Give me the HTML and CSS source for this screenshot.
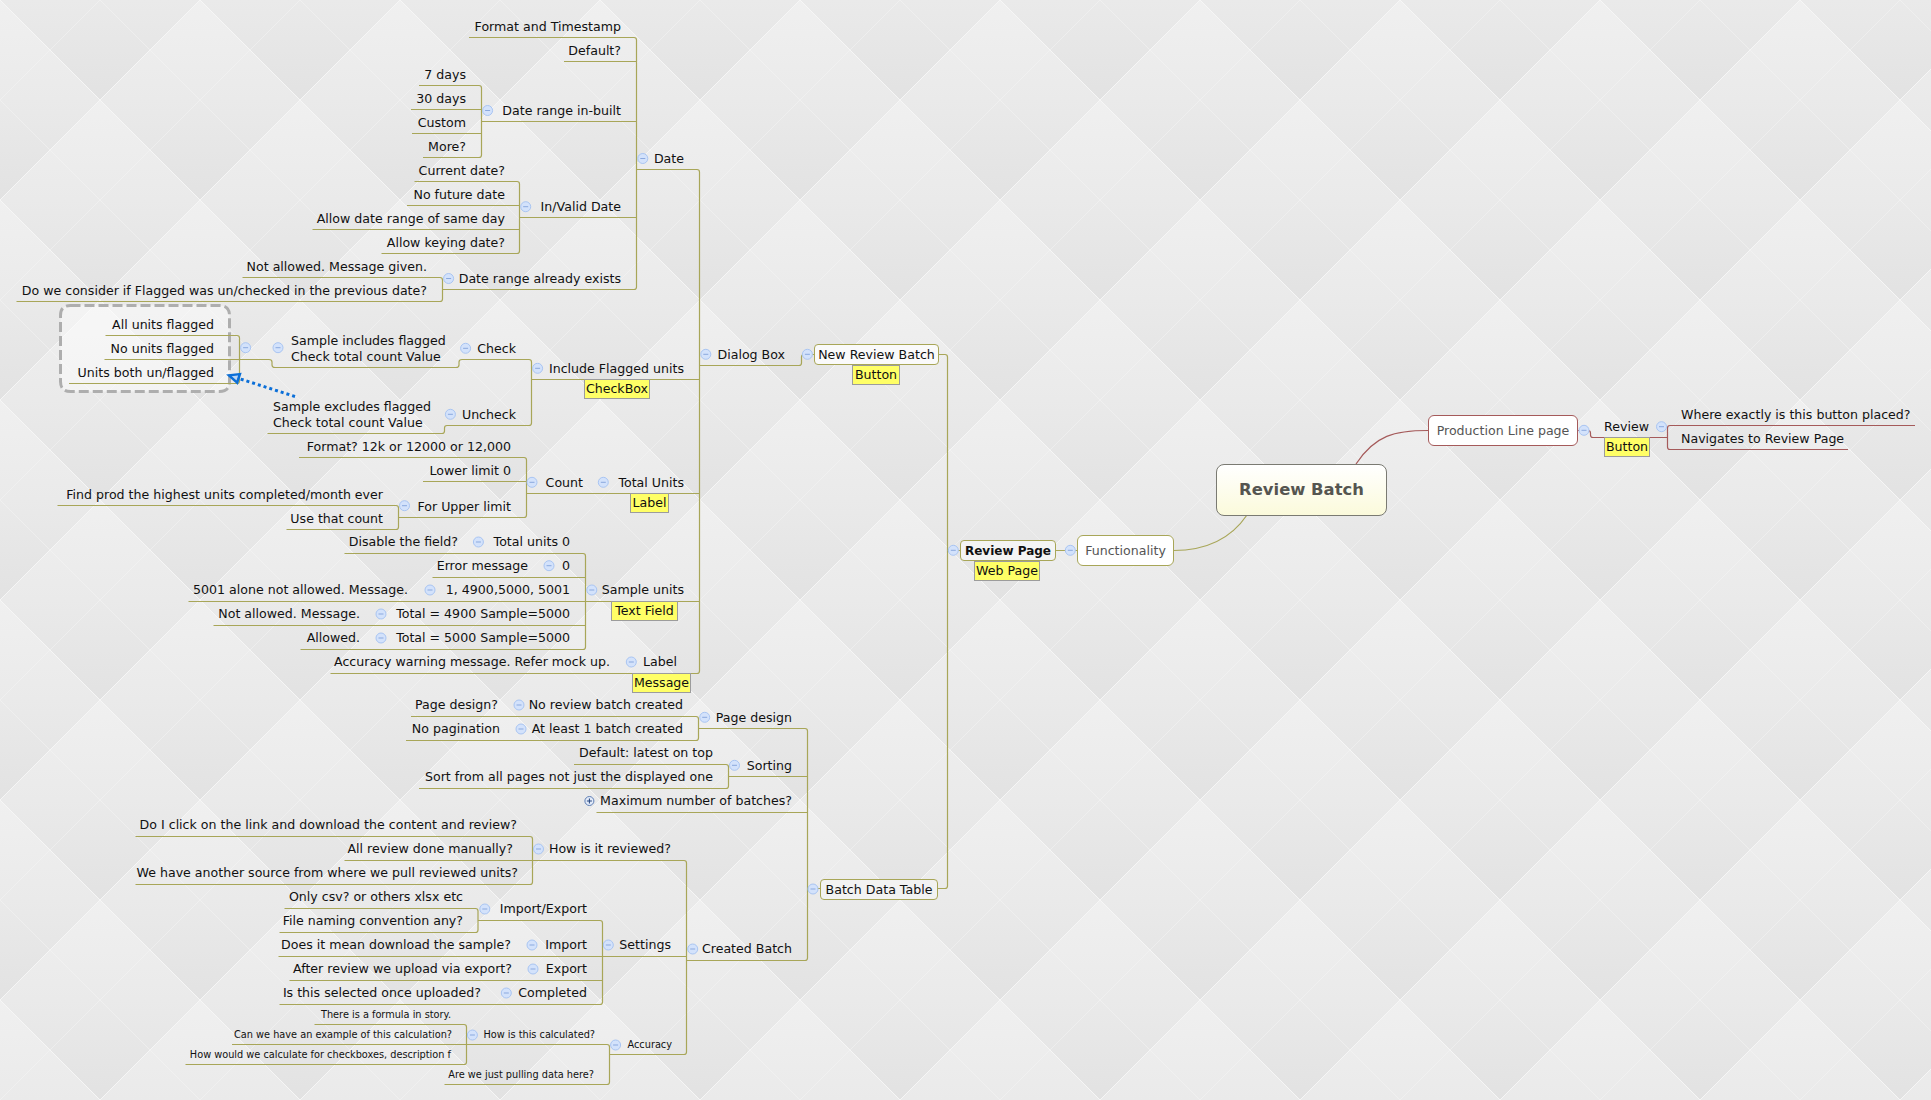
FILE: index.html
```html
<!DOCTYPE html>
<html lang="en">
<head>
<meta charset="utf-8">
<title>Review Batch</title>
<link rel="stylesheet" href="styles.css">
</head>
<body>
<main class="canvas">
<svg class="sheet" width="1931" height="1100" viewBox="0 0 1931 1100" aria-hidden="true">
  <defs>
    <linearGradient id="quilt" x1="0" y1="0" x2="0" y2="1">
      <stop offset="0" stop-color="#f0f0f0"/>
      <stop offset="0.5" stop-color="#eaeaea"/>
      <stop offset="1" stop-color="#e2e2e2"/>
    </linearGradient>
    <pattern id="tile" patternUnits="userSpaceOnUse" width="200" height="200">
      <polygon class="diamond" points="0,0 100,100 0,200 -100,100"/>
      <polygon class="diamond" points="200,0 300,100 200,200 100,100"/>
      <polygon class="diamond" points="100,-100 200,0 100,100 0,0"/>
      <polygon class="diamond" points="100,100 200,200 100,300 0,200"/>
      <path class="seam-soft" d="M0 100L100 0M100 200L200 100M100 0L200 100M0 100L100 200"/>
      <path class="seam" d="M0 0L200 200M0 200L200 0"/>
    </pattern>
    <g id="minus"><circle class="knob" r="5"/><path class="knob-mark" d="M-2.5 0H2.5"/></g>
    <g id="plus"><circle class="knob-open" r="4.5"/><path class="knob-open-mark" d="M-2.5 0H2.5M0 -2.5V2.5"/></g>
    <marker id="head" markerUnits="userSpaceOnUse" markerWidth="16" markerHeight="16" refX="2" refY="7" orient="auto">
      <path class="arrow-head" d="M2 2.500L12 7L2 11.500Z"/>
    </marker>
  </defs>
  <rect width="1931" height="1100" fill="url(#tile)"/>

  <path class="frame" d="M70.500 305.500H219.500Q229.500 305.500 229.500 315.500V381.500Q229.500 391.500 219.500 391.500H70.500Q60.500 391.500 60.500 381.500V315.500Q60.500 305.500 70.500 305.500Z"/>

  <g class="links">
    <path d="M469 37.500H634Q636.500 37.500 636.500 40V287Q636.500 289.500 634 289.500H442.500"/>
    <path d="M564 61.500H636.500M481.500 121.500H636.500M519.500 217.500H636.500"/>
    <path d="M419 85.500H479Q481.500 85.500 481.500 88V155Q481.500 157.500 479 157.500H423M411 109.500H481.500M412 133.500H481.500"/>
    <path d="M414.500 181.500H517Q519.500 181.500 519.500 184V251Q519.500 253.500 517 253.500H381.500M407 205.500H519.500M312.500 229.500H519.500"/>
    <path d="M242.500 277.500H440Q442.500 277.500 442.500 280V299Q442.500 301.500 440 301.500H16.500"/>
    <path d="M636.500 169.500H697Q699.500 169.500 699.500 172V671Q699.500 673.500 697 673.500H330.500"/>
    <path d="M531.500 379.500H699.500M526.500 493.500H699.500M585.500 601.500H699.500"/>
    <path d="M105.500 335.500H237Q239.500 335.500 239.500 338V381Q239.500 383.500 237 383.500H69M104.500 359.500H239.500"/>
    <path d="M240 359.500H269Q272 359.500 272 362V365Q272 367.500 275 367.500H456Q459 367.500 459 365V362Q459 359.500 462 359.500H529Q531.500 359.500 531.500 362V423Q531.500 425.500 529 425.500H447Q444.500 425.500 444.500 428V431Q444.500 433.500 442 433.500H267.500"/>
    <path d="M299 457.500H524Q526.500 457.500 526.500 460V515Q526.500 517.500 524 517.500H398.500M423 481.500H526.500"/>
    <path d="M57.500 505.500H396Q398.500 505.500 398.500 508V527Q398.500 529.500 396 529.500H286.500"/>
    <path d="M344.500 553.500H583Q585.500 553.500 585.500 556V647Q585.500 649.500 583 649.500H300.500M432.500 577.500H585.500M188.500 601.500H585.500M213.500 625.500H585.500"/>
    <path d="M699.500 365.500H799Q801.500 365.500 801.500 363V357Q801.500 354.500 804 354.500H815"/>
    <path d="M938 354.500H945Q947.500 354.500 947.500 357V886Q947.500 888.500 945 888.500H938M947.500 550.500H961M1055 550.500H1078"/>
    <path d="M698 728.500H805Q807.500 728.500 807.500 731V958Q807.500 960.500 805 960.500H686.500M728 776.500H807.500M596.500 812.500H807.500M807.500 888.500H821"/>
    <path d="M411 716.500H696Q698.500 716.500 698.500 719V738Q698.500 740.500 696 740.500H406"/>
    <path d="M574 764.500H726Q728.500 764.500 728.500 767V786Q728.500 788.500 726 788.500H419"/>
    <path d="M532 860.500H684Q686.500 860.500 686.500 863V1052Q686.500 1054.500 684 1054.500H609.500M602.500 956.500H686.500"/>
    <path d="M135.500 836.500H530Q532.500 836.500 532.500 839V882Q532.500 884.500 530 884.500H135.500M344.500 860.500H532.500"/>
    <path d="M478 920.500H600Q602.500 920.500 602.500 923V1002Q602.500 1004.500 600 1004.500H279.500M278.500 956.500H602.500M289.500 980.500H602.500"/>
    <path d="M284.500 908.500H475.500Q478 908.500 478 911V930Q478 932.500 475.500 932.500H279.500"/>
    <path d="M466.500 1044.500H607Q609.500 1044.500 609.500 1047V1082Q609.500 1084.500 607 1084.500H444.500"/>
    <path d="M314.500 1024.500H464Q466.500 1024.500 466.500 1027V1062Q466.500 1064.500 464 1064.500H185.500M232 1044.500H466.500"/>
    <path d="M1173.500 550.500C1205 550.500 1230 540 1247 515"/>
  </g>
  <g class="links-red">
    <path d="M1428 430.500C1395 430.500 1375 435 1356 464"/>
    <path d="M1577 430.500H1588Q1590.500 430.500 1590.500 433V435Q1590.500 437.500 1593 437.500H1667.500"/>
    <path d="M1915 425.500H1670Q1667.500 425.500 1667.500 428V447Q1667.500 449.500 1670 449.500H1848"/>
  </g>

  <use href="#minus" x="487.600" y="110.500"/><use href="#minus" x="642.800" y="158.500"/><use href="#minus" x="525.700" y="206.700"/>
  <use href="#minus" x="448.600" y="278.500"/><use href="#minus" x="245.600" y="347.700"/><use href="#minus" x="278" y="347.700"/>
  <use href="#minus" x="465.600" y="348.300"/><use href="#minus" x="537.600" y="368.300"/><use href="#minus" x="450.400" y="414.300"/>
  <use href="#minus" x="532" y="482.300"/><use href="#minus" x="603.300" y="482.300"/><use href="#minus" x="404.500" y="505.700"/>
  <use href="#minus" x="478.400" y="542"/><use href="#minus" x="591.800" y="590"/><use href="#minus" x="549" y="565.700"/>
  <use href="#minus" x="430" y="590"/><use href="#minus" x="381" y="614"/><use href="#minus" x="381" y="638"/>
  <use href="#minus" x="631.300" y="662"/><use href="#minus" x="705.800" y="354.300"/><use href="#minus" x="807.400" y="354.300"/>
  <use href="#minus" x="953.300" y="550.300"/><use href="#minus" x="1070.300" y="550.300"/><use href="#minus" x="1584" y="430.300"/>
  <use href="#minus" x="1661.500" y="426.700"/><use href="#minus" x="704.700" y="717.300"/><use href="#minus" x="519" y="705"/>
  <use href="#minus" x="521" y="729"/><use href="#minus" x="734.500" y="765.300"/><use href="#minus" x="692.700" y="949"/>
  <use href="#minus" x="538.500" y="849"/><use href="#minus" x="608.300" y="945"/><use href="#minus" x="484.800" y="909"/>
  <use href="#minus" x="532" y="945"/><use href="#minus" x="533" y="969"/><use href="#minus" x="506.300" y="993"/>
  <use href="#minus" x="615.600" y="1045"/><use href="#minus" x="472.400" y="1035"/><use href="#minus" x="813" y="889"/>
  <use href="#plus" x="589.400" y="801"/>

  <path class="arrow" marker-end="url(#head)" d="M295 396.500L238.500 378.400"/>
</svg>

<div class="t r" style="left:621px;top:18px">Format and Timestamp</div>
<div class="t r" style="left:621px;top:42px">Default?</div>
<div class="t r" style="left:621px;top:102px">Date range in-built</div>
<div class="t r" style="left:466px;top:66px">7 days</div>
<div class="t r" style="left:466px;top:90px">30 days</div>
<div class="t r" style="left:466px;top:114px">Custom</div>
<div class="t r" style="left:466px;top:138px">More?</div>
<div class="t r" style="left:684px;top:150px">Date</div>
<div class="t r" style="left:621px;top:198px">In/Valid Date</div>
<div class="t r" style="left:505px;top:162px">Current date?</div>
<div class="t r" style="left:505px;top:186px">No future date</div>
<div class="t r" style="left:505px;top:210px">Allow date range of same day</div>
<div class="t r" style="left:505px;top:234px">Allow keying date?</div>
<div class="t r" style="left:621px;top:270px">Date range already exists</div>
<div class="t r" style="left:427px;top:258px">Not allowed. Message given.</div>
<div class="t r" style="left:427px;top:282px">Do we consider if Flagged was un/checked in the previous date?</div>

<div class="t r" style="left:214px;top:316px">All units flagged</div>
<div class="t r" style="left:214px;top:340px">No units flagged</div>
<div class="t r" style="left:214px;top:364px">Units both un/flagged</div>
<div class="t" style="left:291px;top:332px">Sample includes flagged<br>Check total count Value</div>
<div class="t r" style="left:516px;top:340px">Check</div>
<div class="t r" style="left:684px;top:360px">Include Flagged units</div>
<div class="t" style="left:273px;top:398px">Sample excludes flagged<br>Check total count Value</div>
<div class="t r" style="left:516px;top:406px">Uncheck</div>
<div class="tag" style="left:584px;top:379px;width:66px">CheckBox</div>

<div class="t r" style="left:511px;top:438px">Format? 12k or 12000 or 12,000</div>
<div class="t r" style="left:511px;top:462px">Lower limit 0</div>
<div class="t r" style="left:511px;top:498px">For Upper limit</div>
<div class="t r" style="left:383px;top:486px">Find prod the highest units completed/month ever</div>
<div class="t r" style="left:383px;top:510px">Use that count</div>
<div class="t r" style="left:583px;top:474px">Count</div>
<div class="t r" style="left:684px;top:474px">Total Units</div>
<div class="tag" style="left:630px;top:493px;width:39px">Label</div>

<div class="t r" style="left:570px;top:533px">Total units 0</div>
<div class="t r" style="left:458px;top:533px">Disable the field?</div>
<div class="t r" style="left:570px;top:557px">0</div>
<div class="t r" style="left:528px;top:557px">Error message</div>
<div class="t r" style="left:570px;top:581px">1, 4900,5000, 5001</div>
<div class="t r" style="left:408px;top:581px">5001 alone not allowed. Message.</div>
<div class="t r" style="left:570px;top:605px">Total = 4900 Sample=5000</div>
<div class="t r" style="left:360px;top:605px">Not allowed. Message.</div>
<div class="t r" style="left:570px;top:629px">Total = 5000 Sample=5000</div>
<div class="t r" style="left:360px;top:629px">Allowed.</div>
<div class="t r" style="left:684px;top:581px">Sample units</div>
<div class="tag" style="left:611px;top:601px;width:67px">Text Field</div>
<div class="t r" style="left:677px;top:653px">Label</div>
<div class="t r" style="left:610px;top:653px">Accuracy warning message. Refer mock up.</div>
<div class="tag" style="left:632px;top:673px;width:59px">Message</div>

<div class="t r" style="left:785px;top:346px">Dialog Box</div>
<div class="node" style="left:814px;top:344px;width:125px;height:21px">New Review Batch</div>
<div class="tag" style="left:852px;top:365px;width:48px">Button</div>
<div class="node strong" style="left:960px;top:540px;width:96px;height:21px">Review Page</div>
<div class="tag" style="left:974px;top:561px;width:66px">Web Page</div>
<div class="node grey tall" style="left:1077px;top:535px;width:97px;height:31px">Functionality</div>
<div class="node dim" style="left:820px;top:879px;width:118px;height:21px">Batch Data Table</div>

<div class="root">Review Batch</div>
<div class="node grey tall ruby" style="left:1428px;top:415px;width:150px;height:31px">Production Line page</div>
<div class="t" style="left:1604px;top:418px">Review</div>
<div class="tag" style="left:1604px;top:437px;width:46px">Button</div>
<div class="t" style="left:1681px;top:406px">Where exactly is this button placed?</div>
<div class="t" style="left:1681px;top:430px">Navigates to Review Page</div>

<div class="t r" style="left:792px;top:709px">Page design</div>
<div class="t r" style="left:683px;top:696px">No review batch created</div>
<div class="t r" style="left:498px;top:696px">Page design?</div>
<div class="t r" style="left:683px;top:720px">At least 1 batch created</div>
<div class="t r" style="left:500px;top:720px">No pagination</div>
<div class="t r" style="left:792px;top:757px">Sorting</div>
<div class="t r" style="left:713px;top:744px">Default: latest on top</div>
<div class="t r" style="left:713px;top:768px">Sort from all pages not just the displayed one</div>
<div class="t r" style="left:792px;top:792px">Maximum number of batches?</div>
<div class="t r" style="left:792px;top:940px">Created Batch</div>
<div class="t r" style="left:671px;top:840px">How is it reviewed?</div>
<div class="t r" style="left:517px;top:816px">Do I click on the link and download the content and review?</div>
<div class="t r" style="left:513px;top:840px">All review done manually?</div>
<div class="t r" style="left:518px;top:864px">We have another source from where we pull reviewed units?</div>
<div class="t r" style="left:671px;top:936px">Settings</div>
<div class="t r" style="left:587px;top:900px">Import/Export</div>
<div class="t r" style="left:463px;top:888px">Only csv? or others xlsx etc</div>
<div class="t r" style="left:463px;top:912px">File naming convention any?</div>
<div class="t r" style="left:587px;top:936px">Import</div>
<div class="t r" style="left:511px;top:936px">Does it mean download the sample?</div>
<div class="t r" style="left:587px;top:960px">Export</div>
<div class="t r" style="left:512px;top:960px">After review we upload via export?</div>
<div class="t r" style="left:587px;top:984px">Completed</div>
<div class="t r" style="left:481px;top:984px">Is this selected once uploaded?</div>
<div class="t r small" style="left:672px;top:1036px">Accuracy</div>
<div class="t r small" style="left:595px;top:1026px">How is this calculated?</div>
<div class="t r small" style="left:451px;top:1006px">There is a formula in story.</div>
<div class="t r small" style="left:452px;top:1026px">Can we have an example of this calculation?</div>
<div class="t r small" style="left:451px;top:1046px">How would we calculate for checkboxes, description f</div>
<div class="t r small" style="left:594px;top:1066px">Are we just pulling data here?</div>
</main>
</body>
</html>
```
FILE: styles.css
```css
html, body { margin: 0; padding: 0; }
body { background: #ececec; }

.canvas {
  position: relative;
  width: 1931px;
  height: 1100px;
  overflow: hidden;
  font-family: "DejaVu Sans", "Liberation Sans", sans-serif;
  font-size: 12.6px;
  line-height: 16px;
  color: #111;
}

.sheet { position: absolute; left: 0; top: 0; display: block; }

.diamond { fill: url(#quilt); }
.seam-soft { fill: none; stroke: #f5f5f5; stroke-width: 0.8; opacity: 0.7; }
.seam { fill: none; stroke: #f6f6f6; stroke-width: 1; }

.links path { fill: none; stroke: #a8a658; stroke-width: 1.2; }
.links-red path { fill: none; stroke: #a55a5a; stroke-width: 1.2; }

.knob { fill: #d3e2fb; stroke: #a9c5f2; stroke-width: 1; }
.knob-mark { stroke: #8ba9de; stroke-width: 1; fill: none; }
.knob-open { fill: #e2eaf8; stroke: #5f7fb5; stroke-width: 1; }
.knob-open-mark { stroke: #24457e; stroke-width: 1; fill: none; }

.frame {
  fill: rgba(255, 255, 255, 0.45);
  stroke: #aeaeae;
  stroke-width: 3;
  stroke-dasharray: 10 4;
}
.arrow { fill: none; stroke: #0b6fd8; stroke-width: 3; stroke-dasharray: 3 3; }
.arrow-head { fill: #bcd6f4; stroke: #0b6fd8; stroke-width: 2.5; }

.t { position: absolute; margin-top: 1px; white-space: nowrap; }
.r { transform: translateX(-100%); }
.small { font-size: 9.75px; }

.tag {
  position: absolute;
  box-sizing: border-box;
  height: 20px;
  display: flex;
  align-items: center;
  justify-content: center;
  background: #ffff66;
  border: 1px solid #9c9c9c;
  color: #111;
  white-space: nowrap;
}

.node {
  position: absolute;
  box-sizing: border-box;
  display: flex;
  align-items: center;
  justify-content: center;
  background: #fafafa;
  border: 1px solid #a8a658;
  border-radius: 4px;
  white-space: nowrap;
}
.strong { font-weight: bold; background: #f4f4f4; font-size: 12px; }
.dim { background: #f2f2f2; }
.grey { color: #555; background: #fff; }
.tall { border-radius: 6px; }
.ruby { border-color: #a55a5a; }

.root {
  position: absolute;
  left: 1216px;
  top: 464px;
  box-sizing: border-box;
  width: 171px;
  height: 52px;
  display: flex;
  align-items: center;
  justify-content: center;
  background: linear-gradient(#ffffff, #fbfadb);
  border: 1px solid #7a7a72;
  border-radius: 8px;
  font-size: 16.4px;
  font-weight: bold;
  color: #555550;
}
```
